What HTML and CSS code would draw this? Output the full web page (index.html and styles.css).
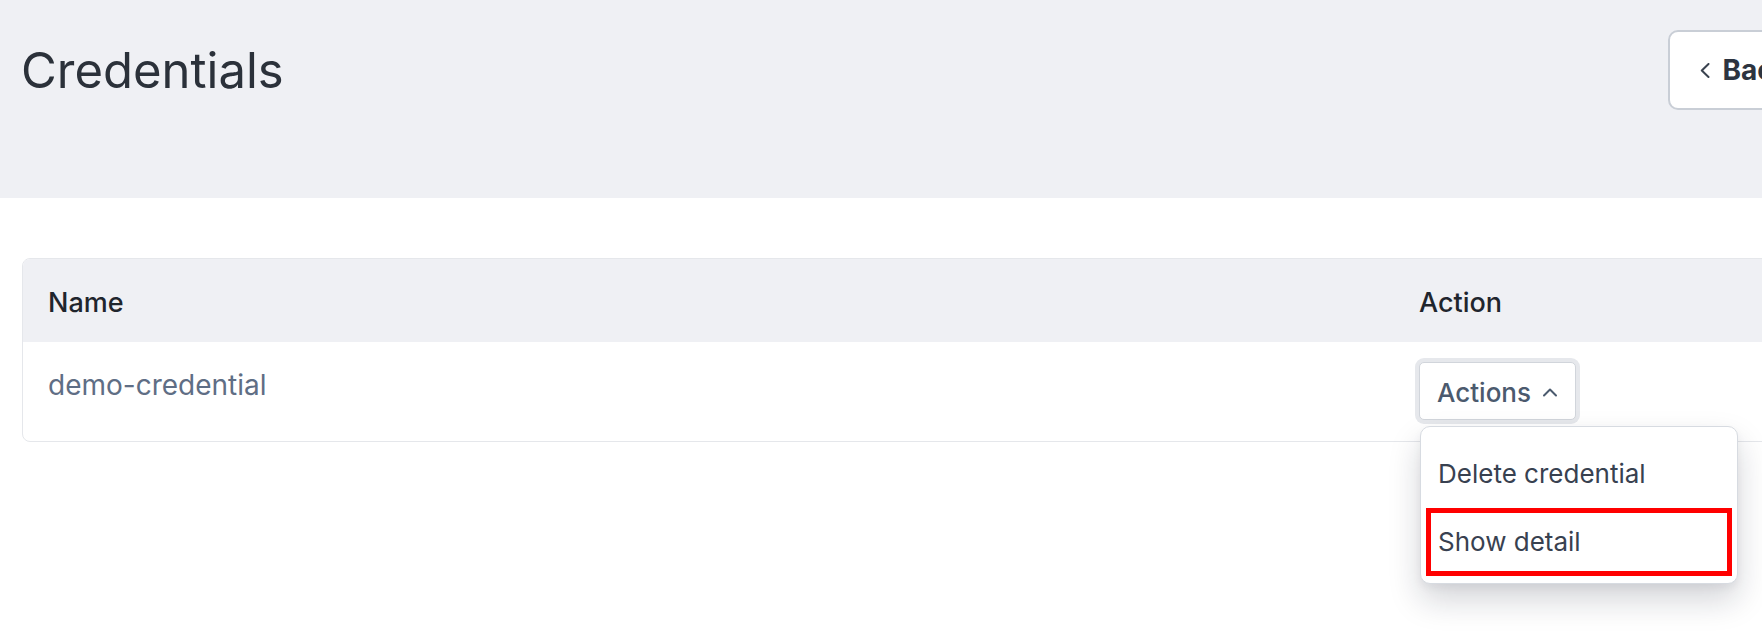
FILE: index.html
```html
<!DOCTYPE html>
<html lang="en">
<head>
<meta charset="utf-8">
<title>Credentials</title>
<link rel="stylesheet" href="styles.css">
</head>
<body>
<div class="page">
  <header class="page-header">
    <h1 class="title">Credentials</h1>
    <button class="back-btn" type="button">
      <svg class="back-icon" width="10" height="15" viewBox="0 0 10 15" aria-hidden="true"><path d="M8.5 1 L1.8 7.5 L8.5 14" fill="none" stroke="currentColor" stroke-width="2" stroke-linecap="round" stroke-linejoin="round"/></svg>
      <span>Back</span>
    </button>
  </header>
  <main class="content">
    <div class="card">
      <div class="table-head">
        <div class="cell">Name</div>
        <div class="cell">Action</div>
      </div>
      <div class="table-row">
        <div class="cell"><a class="cred-link" href="#">demo-credential</a></div>
        <div class="cell">
          <div class="dropdown">
            <button class="actions-btn" type="button">
              <span>Actions</span>
              <svg class="chev-up" width="16" height="10" viewBox="0 0 16 10" aria-hidden="true"><path d="M2 8.5 L8 2.5 L14 8.5" fill="none" stroke="currentColor" stroke-width="2" stroke-linecap="round" stroke-linejoin="round"/></svg>
            </button>
            <div class="menu">
              <div class="menu-item">Delete credential</div>
              <div class="menu-item highlighted">Show detail</div>
            </div>
          </div>
        </div>
      </div>
    </div>
  </main>
</div>
</body>
</html>
```

FILE: styles.css
```css
html {
  overflow: hidden;
  background: #ffffff;
}

body {
  margin: 0;
  padding: 0;
  font-family: Inter, "Noto Sans", "Liberation Sans", sans-serif;
  width: 1847px;
  min-height: 640px;
}

.page {
  width: 1847px;
}

.page-header {
  background: #eff0f4;
  height: 198px;
  box-sizing: border-box;
  padding: 30px 17px 0 21px;
  display: flex;
  justify-content: space-between;
  align-items: flex-start;
}

.title {
  margin: 0;
  font-size: 49px;
  font-weight: 400;
  line-height: 82px;
  color: #2b313a;
}

.back-btn {
  height: 80px;
  box-sizing: border-box;
  border: 2px solid #c9ced6;
  border-radius: 10px;
  background: #ffffff;
  padding: 0 38px 0 30px;
  display: flex;
  align-items: center;
  gap: 13px;
  font-family: inherit;
  font-size: 28px;
  font-weight: 700;
  color: #2d3440;
}

.back-icon {
  color: #3a4350;
  display: block;
}

.content {
  padding: 60px 22px 0 22px;
}

.card {
  border: 1px solid #e5e7eb;
  border-radius: 8px;
}

.table-head {
  display: grid;
  grid-template-columns: 1fr 430px;
  height: 83px;
  box-sizing: border-box;
  padding-top: 4px;
  align-items: center;
  background: #eff0f4;
  border-radius: 7px 7px 0 0;
  font-size: 27px;
  font-weight: 500;
  color: #1f252d;
}

.cell {
  padding-left: 25px;
}

.table-row {
  display: grid;
  grid-template-columns: 1fr 430px;
  height: 99px;
  box-sizing: border-box;
  padding-top: 20px;
  align-items: start;
}

.cred-link {
  font-size: 28px;
  line-height: 46px;
  color: #5f6e85;
  text-decoration: none;
}

.dropdown {
  position: relative;
  display: inline-block;
}

.actions-btn {
  height: 58px;
  box-sizing: border-box;
  border: 1px solid #d1d5db;
  border-radius: 5px;
  background: #ffffff;
  box-shadow: 0 0 0 4px #e6e8ec;
  padding: 2px 17px 0 17px;
  display: flex;
  align-items: center;
  gap: 11px;
  font-family: inherit;
  font-size: 26px;
  font-weight: 500;
  color: #4b5a6e;
}

.chev-up {
  display: block;
}

.menu {
  position: absolute;
  top: 64px;
  left: 1px;
  width: 318px;
  box-sizing: border-box;
  background: #ffffff;
  border: 1px solid #d7dbe1;
  border-radius: 10px;
  box-shadow: 0 16px 32px rgba(15, 23, 42, 0.18), 0 4px 8px rgba(15, 23, 42, 0.05);
  padding: 13px 0 7px 0;
  z-index: 10;
}

.menu-item {
  height: 68px;
  box-sizing: border-box;
  margin: 0 5px;
  border: 5px solid transparent;
  padding: 0 0 2px 7px;
  display: flex;
  align-items: center;
  font-size: 26px;
  font-weight: 400;
  color: #384150;
}

.menu-item.highlighted {
  border-color: #ff0000;
}
```
